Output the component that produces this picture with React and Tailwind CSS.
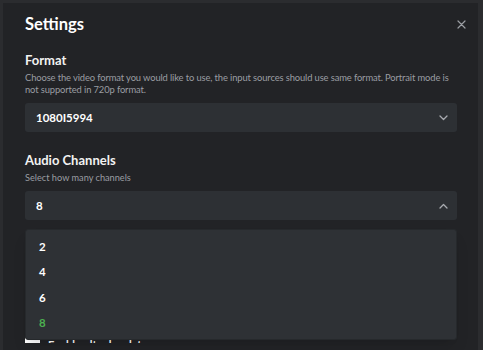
import React from "react";

const font = { fontFamily: 'Lato, "Noto Sans", sans-serif' };

function Chevron({ up }) {
  return (
    <svg width="9" height="6" viewBox="0 0 9 6" fill="none" stroke="#a8abb0" strokeWidth="1.3" strokeLinecap="round" strokeLinejoin="round">
      {up ? <path d="M1 5 L4.5 1.5 L8 5" /> : <path d="M1 1 L4.5 4.5 L8 1" />}
    </svg>
  );
}

function SelectBox({ value, open }) {
  return (
    <div className="flex h-[29px] items-center justify-between rounded-[3px] bg-[#2d3034] pl-[11px] pr-[9px]">
      <span className="text-[11.5px] font-bold text-white">{value}</span>
      <Chevron up={open} />
    </div>
  );
}

export default function App() {
  const channels = ["2", "4", "6", "8"];
  const selected = "8";

  return (
    <div className="h-[350px] w-[483px] overflow-hidden bg-[#2b2c2f] pl-[3px] pt-[3px]" style={font}>
      <div className="relative h-[360px] w-[475px] bg-[#222326] pl-[22px] pr-[21px] pt-[9px]">
        {/* header */}
        <div className="flex h-[24px] items-center justify-between">
          <h1 className="text-[16.5px] font-bold text-white">Settings</h1>
          <button className="-mr-[12px] flex h-[16px] w-[16px] items-center justify-center">
            <svg width="9" height="9" viewBox="0 0 9 9" stroke="#9b9ea3" strokeWidth="1.2" strokeLinecap="round">
              <path d="M1 1 L8 8 M8 1 L1 8" />
            </svg>
          </button>
        </div>

        {/* format */}
        <div className="mt-[15px]">
          <h2 className="h-[18px] text-[13px] font-bold leading-[18px] text-[#f2f2f2]">Format</h2>
          <p className="mt-[3px] text-[9.4px] leading-[12px] tracking-[-0.12px] text-[#9a9da2]">
            Choose the video format you would like to use, the input sources should use same format. Portrait mode is not supported in 720p format.
          </p>
          <div className="mt-[7px]">
            <SelectBox value="1080I5994" />
          </div>
        </div>

        {/* audio channels */}
        <div className="mt-[19px]">
          <h2 className="h-[18px] text-[13px] font-bold leading-[18px] text-[#f2f2f2]">Audio Channels</h2>
          <p className="mt-[3px] text-[9.2px] leading-[12px] text-[#9a9da2]">Select how many channels</p>
          <div className="relative mt-[7px]">
            <SelectBox value={selected} open />
            <ul className="absolute left-0 right-0 top-[38px] z-10 h-[111px] rounded-[3px] border border-[#26292c] bg-[#2e3135] pt-[4px] shadow-lg">
              {channels.map((c) => (
                <li
                  key={c}
                  className={`flex h-[25.3px] items-center pl-[13px] text-[11.5px] font-bold ${c === selected ? "text-[#4caf50]" : "text-white"}`}
                >
                  {c}
                </li>
              ))}
            </ul>
          </div>
        </div>

        <div className="mt-[117px] h-[6px] overflow-hidden">
          <div className="flex items-start gap-[8px]">
            <span className="h-[14px] w-[15px] rounded-[2px] bg-white" />
            <span className="text-[11px] font-bold text-white">Enable ultra low latency</span>
          </div>
        </div>
      </div>
    </div>
  );
}
